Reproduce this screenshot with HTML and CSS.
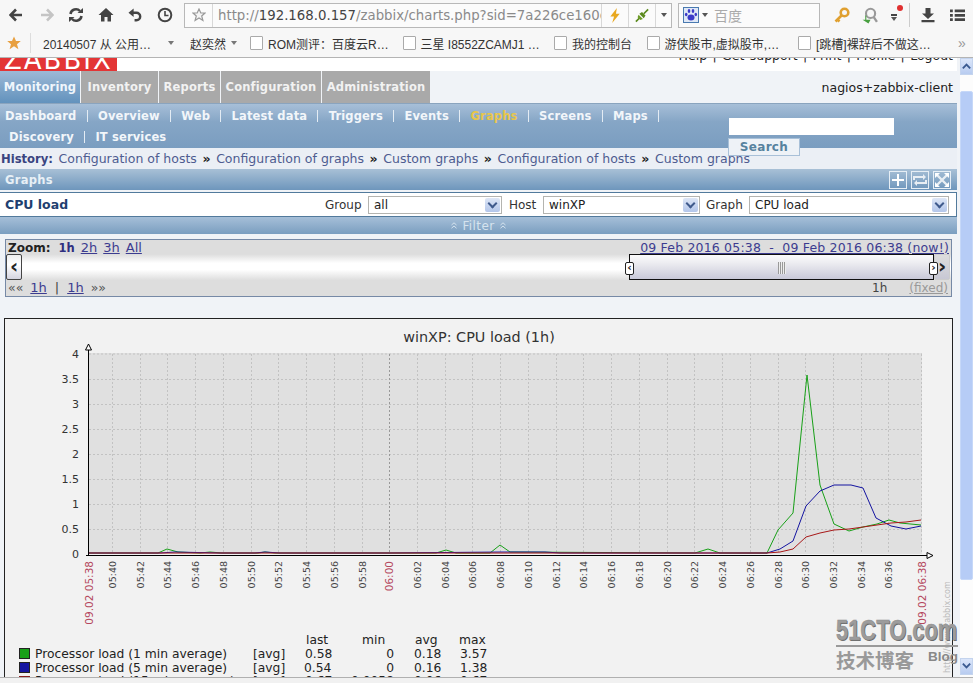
FILE: index.html
```html
<!DOCTYPE html>
<html lang="en">
<head>
<meta charset="utf-8">
<title>Zabbix charts</title>
<link rel="stylesheet" href="styles.css">
</head>
<body>
<header class="toolbar">
  <svg class="ico nav-back" viewBox="0 0 14 14"><path d="M7 1.5 1.5 7 7 12.5M2 7h11" fill="none" stroke="#444" stroke-width="2.6"/></svg>
  <svg class="ico nav-fwd" viewBox="0 0 14 14"><path d="M7 1.5 12.5 7 7 12.5M12 7H1" fill="none" stroke="#c4c4c4" stroke-width="2.6"/></svg>
  <svg class="ico nav-reload" viewBox="0 0 16 16"><path d="M2.5 7a5.5 5.5 0 0 1 9.5-3M13.500 9a5.500 5.500 0 0 1-9.500 3" fill="none" stroke="#444" stroke-width="2.500"/><path d="M9.500 6H15V1zM6.500 10H1v5z" fill="#444"/></svg>
  <svg class="ico nav-home" viewBox="0 0 16 16"><path d="M8 1 0.500 8H3v6.500h3.500V10h3v4.500H13V8h2.500z" fill="#444"/></svg>
  <svg class="ico nav-undo" viewBox="0 0 16 16"><path d="M4 5h5a4 4 0 0 1 0 8H7" fill="none" stroke="#444" stroke-width="2.600"/><path d="M6 0.500V9.500L0.500 5z" fill="#444"/></svg>
  <svg class="ico nav-clock" viewBox="0 0 16 16"><circle cx="8" cy="8" r="6.300" fill="none" stroke="#444" stroke-width="2"/><path d="M8 4v4.500h3.500" fill="none" stroke="#444" stroke-width="1.600"/></svg>
  <div class="urlbox">
    <svg class="url-star" viewBox="0 0 14 14"><path d="M7 1l1.800 4H13L9.700 8l1.200 4.500L7 10l-3.900 2.500L4.300 8 1 5h4.200z" fill="#f4f4f4" stroke="#999" stroke-width="1.200"/></svg>
    <span class="url-sep"></span>
    <span class="url-text"><span class="url-dim">http://</span>192.168.0.157<span class="url-dim">/zabbix/charts.php?sid=7a226ce160c6</span></span>
    <span class="url-sep"></span>
    <svg class="url-act" viewBox="0 0 14 16"><path d="M9 0 2 9h4l-2 7 8-10H8z" fill="#e8a820"/></svg>
    <span class="url-sep"></span>
    <svg class="url-act" viewBox="0 0 16 16"><path d="M1 15l5-5M15 1l-5 5" stroke="#5b8a1e" stroke-width="2"/><path d="M5 6l5 5 2-3-4-4z" fill="#5b8a1e"/><path d="M4 7l5 5-3 1-3-3z" fill="#6e9c28"/></svg>
    <span class="url-sep"></span>
    <span class="caret url-caret"></span>
  </div>
  <div class="searchbox">
    <span class="paw"><svg viewBox="0 0 14 14"><ellipse cx="7" cy="9.500" rx="3.500" ry="3" fill="#3b3bc8"/><ellipse cx="2.200" cy="6.500" rx="1.300" ry="1.700" fill="#3b3bc8"/><ellipse cx="11.800" cy="6.500" rx="1.300" ry="1.700" fill="#3b3bc8"/><ellipse cx="5" cy="3" rx="1.300" ry="1.900" fill="#3b3bc8"/><ellipse cx="9" cy="3" rx="1.300" ry="1.900" fill="#3b3bc8"/></svg></span>
    <span class="caret"></span>
    <span class="search-hint">百度</span>
  </div>
  <svg class="ico tool-key" viewBox="0 0 16 16"><circle cx="10.500" cy="5.500" r="3.800" fill="none" stroke="#e0a030" stroke-width="2.600"/><path d="M8 8 1.500 14.500M3.500 12.500l2 2" fill="none" stroke="#e0a030" stroke-width="2.600"/></svg>
  <svg class="ico tool-find" viewBox="0 0 16 16"><circle cx="9" cy="6" r="4.300" fill="none" stroke="#999" stroke-width="2"/><path d="M12 9.500l3 4.500" stroke="#999" stroke-width="2.200"/><path d="M5 8v4h4l-2 3.500L1.500 12H4V8z" fill="#48a040"/></svg>
  <span class="tool-menu"><span class="reddot"></span><span class="tool-bars"></span><span class="caret tool-caret"></span></span>
  <span class="tool-sep"></span>
  <svg class="ico tool-down" viewBox="0 0 16 16"><path d="M5.500 1h5v5.500H14L8 12 2 6.500h3.500zM1.500 13h13v2.200h-13z" fill="#444"/></svg>
  <svg class="ico tool-burger" viewBox="0 0 16 14"><path d="M0 1h3v3H0zM5 1h11v3H5zM0 5.800h3v3H0zM5 5.800h11v3H5zM0 10.500h3v3H0zM5 10.500h11v3H5z" fill="#444"/></svg>
</header>

<nav class="bookmarks">
  <svg class="bm-star" viewBox="0 0 14 14"><path d="M7 0.500l2 4.500h4.800L10 8.200l1.400 5L7 10.300l-4.400 2.900L4 8.200 0.200 5H5z" fill="#e8a040"/></svg>
  <span class="bm-sep"></span>
  <span class="bm bm-a">20140507 从 公用…<span class="caret bm-caret bm-caret-a"></span></span>
  <span class="bm bm-b">赵奕然<span class="caret bm-caret"></span></span>
  <span class="bm bm-c"><span class="doc"></span>ROM测评：百度云R…</span>
  <span class="bm bm-d"><span class="doc"></span>三星 I8552ZCAMJ1 …</span>
  <span class="bm bm-e"><span class="doc"></span>我的控制台</span>
  <span class="bm bm-f"><span class="doc"></span>游侠股市,虚拟股市,…</span>
  <span class="bm bm-g"><span class="doc"></span>[跳槽]裸辞后不做这…</span>
  <span class="bm-more">»</span>
</nav>

<div class="viewport">
  <main class="page">
    <div class="top-strip">
      <div class="logo"><span>ZABBIX</span></div>
      <div class="top-links">Help | Get support | Print | Profile | Logout</div>
    </div>
    <div class="tabs">
      <a class="tab tab-on tab-1">Monitoring</a>
      <a class="tab tab-2">Inventory</a>
      <a class="tab tab-3">Reports</a>
      <a class="tab tab-4">Configuration</a>
      <a class="tab tab-5">Administration</a>
      <span class="node-name">nagios+zabbix-client</span>
    </div>
    <div class="subnav">
      <div class="subrow">
        <a>Dashboard</a><i></i><a>Overview</a><i></i><a>Web</a><i></i><a>Latest data</a><i></i><a>Triggers</a><i></i><a>Events</a><i></i><a class="sub-on">Graphs</a><i></i><a>Screens</a><i></i><a>Maps</a><i></i>
      </div>
      <div class="subrow subrow-2"><a>Discovery</a><i></i><a>IT services</a></div>
      <span class="search-input"></span>
      <span class="search-btn">Search</span>
    </div>
    <div class="history">
      <b>History:</b> <a>Configuration of hosts</a> <em>»</em> <a>Configuration of graphs</a> <em>»</em> <a>Custom graphs</a> <em>»</em> <a>Configuration of hosts</a> <em>»</em> <a>Custom graphs</a>
    </div>
    <div class="sect-head">
      <span>Graphs</span>
      <div class="head-icons">
        <span class="head-icon"><svg viewBox="0 0 16 16"><path d="M8 2v12M2 8h12" stroke="#fff" stroke-width="2"/></svg></span>
        <span class="head-icon"><svg viewBox="0 0 16 16"><path d="M2 8V5h10M14 8v3H4" fill="none" stroke="#e8eef4" stroke-width="2"/><path d="M11 2l3 3-3 3M5 8l-3 3 3 3" fill="#e8eef4"/></svg></span>
        <span class="head-icon"><svg viewBox="0 0 16 16"><path d="M2 2l12 12M14 2 2 14" stroke="#e8eef4" stroke-width="2.400"/><path d="M1 1h5L1 6zM15 1v5l-5-5zM1 15v-5l5 5zM15 15h-5l5-5z" fill="#fff"/></svg></span>
      </div>
    </div>
    <div class="form-row">
      <strong class="form-title">CPU load</strong>
      <label class="f-label">Group</label><span class="sel sel-group">all<span class="sel-btn"></span></span>
      <label class="f-label">Host</label><span class="sel sel-host">winXP<span class="sel-btn"></span></span>
      <label class="f-label">Graph</label><span class="sel sel-graph">CPU load<span class="sel-btn"></span></span>
    </div>
    <div class="filter-bar">
      <svg class="chev" viewBox="0 0 6 7"><path d="M.5 3 3 .8 5.500 3M.5 6.200 3 4 5.500 6.200" fill="none" stroke="#d5e3ee"/></svg>
      <span>Filter</span>
      <svg class="chev" viewBox="0 0 6 7"><path d="M.5 3 3 .8 5.500 3M.5 6.200 3 4 5.500 6.200" fill="none" stroke="#d5e3ee"/></svg>
    </div>

    <section class="zoombox">
      <div class="zoom-row zoom-top">
        <div><b class="z-label">Zoom:</b><b class="z-cur">1h</b><a>2h</a><a>3h</a><a>All</a></div>
        <a class="z-dates">09 Feb 2016 05:38 &nbsp;-&nbsp; 09 Feb 2016 06:38 (now!)</a>
      </div>
      <div class="slider">
        <span class="s-btn s-left">‹</span>
        <span class="s-fill"></span>
        <span class="s-bar">
          <span class="s-handle s-h-l">‹</span>
          <span class="s-grip"></span>
          <span class="s-handle s-h-r">›</span>
        </span>
        <span class="s-btn s-right">›</span>
      </div>
      <div class="zoom-row zoom-bottom">
        <div><span class="z-arr">««</span><a>1h</a><span class="z-pipe">|</span><a>1h</a><span class="z-arr">»»</span></div>
        <div class="z-right"><span class="z-span">1h</span><a class="z-fixed">(fixed)</a></div>
      </div>
    </section>

    <section class="chart">
      <svg class="chart-svg" viewBox="5 319 947 358">
        <text class="c-title" x="479" y="342" text-anchor="middle">winXP: CPU load (1h)</text>
        <rect class="plot" x="89" y="353" width="833" height="201"/>
        <path class="grid" d="M89 354H922M89 379.500H922M89 404.500H922M89 429.500H922M89 454.500H922M89 479.500H922M89 504.500H922M89 529.500H922M112.500 354V554M140.500 354V554M167.500 354V554M195.500 354V554M223.500 354V554M251.500 354V554M278.500 354V554M306.500 354V554M334.500 354V554M362.500 354V554M417.500 354V554M445.500 354V554M472.500 354V554M500.500 354V554M528.500 354V554M556.500 354V554M583.500 354V554M611.500 354V554M639.500 354V554M667.500 354V554M694.500 354V554M722.500 354V554M750.500 354V554M778.500 354V554M805.500 354V554M833.500 354V554M861.500 354V554M888.500 354V554M921.500 354V554"/>
        <path class="grid grid-strong" d="M389.500 354V554"/>
        <polyline class="s-green" points="89,553 158,553 167,549 178,552 200,553 210,552 222,553 258,553 265,552 275,553 320,553 436,553 446,550 456,553 490,553 500,545 510,552 695,553 708,549 720,553 767,553 778,530 793,513 807,375 820,485 834,524 849,531 863,527 877,524 889,520 900,523 921,525"/>
        <polyline class="s-blue" points="89,553 160,553 175,552 220,553 255,553 265,552 280,553 390,553 500,552 545,552 560,553 767,553 780,549 793,541 806,506 820,491 834,485 851,485 863,488 876,518 891,526 906,529 921,526"/>
        <polyline class="s-red" points="89,553 767,553 780,552 793,549 806,537 820,533 834,530 849,529 863,527 877,525 891,523 906,522 921,520"/>
        <path class="axis" d="M88.500 347V556M86 555.500H928"/>
        <path class="arrow" d="M88.500 344 91.500 350H85.500zM933 555.500 927 552.500V558.500z"/>
        <g class="y-labels" text-anchor="end">
          <text x="79" y="358">4</text><text x="79" y="383">3.5</text><text x="79" y="408">3</text><text x="79" y="433">2.5</text><text x="79" y="458">2</text><text x="79" y="483">1.5</text><text x="79" y="508">1</text><text x="79" y="533">0.5</text><text x="79" y="558">0</text>
        </g>
        <g class="x-labels" text-anchor="end">
          <text transform="translate(116 561) rotate(-90)">05:40</text>
          <text transform="translate(144 561) rotate(-90)">05:42</text>
          <text transform="translate(171 561) rotate(-90)">05:44</text>
          <text transform="translate(199 561) rotate(-90)">05:46</text>
          <text transform="translate(227 561) rotate(-90)">05:48</text>
          <text transform="translate(255 561) rotate(-90)">05:50</text>
          <text transform="translate(282 561) rotate(-90)">05:52</text>
          <text transform="translate(310 561) rotate(-90)">05:54</text>
          <text transform="translate(338 561) rotate(-90)">05:56</text>
          <text transform="translate(366 561) rotate(-90)">05:58</text>
          <text transform="translate(421 561) rotate(-90)">06:02</text>
          <text transform="translate(449 561) rotate(-90)">06:04</text>
          <text transform="translate(476 561) rotate(-90)">06:06</text>
          <text transform="translate(504 561) rotate(-90)">06:08</text>
          <text transform="translate(532 561) rotate(-90)">06:10</text>
          <text transform="translate(560 561) rotate(-90)">06:12</text>
          <text transform="translate(587 561) rotate(-90)">06:14</text>
          <text transform="translate(615 561) rotate(-90)">06:16</text>
          <text transform="translate(643 561) rotate(-90)">06:18</text>
          <text transform="translate(671 561) rotate(-90)">06:20</text>
          <text transform="translate(698 561) rotate(-90)">06:22</text>
          <text transform="translate(726 561) rotate(-90)">06:24</text>
          <text transform="translate(754 561) rotate(-90)">06:26</text>
          <text transform="translate(782 561) rotate(-90)">06:28</text>
          <text transform="translate(809 561) rotate(-90)">06:30</text>
          <text transform="translate(837 561) rotate(-90)">06:32</text>
          <text transform="translate(865 561) rotate(-90)">06:34</text>
          <text transform="translate(892 561) rotate(-90)">06:36</text>
        </g>
        <g class="x-labels-red" text-anchor="end">
          <text transform="translate(93 561) rotate(-90)">09.02 05:38</text>
          <text transform="translate(393 561) rotate(-90)">06:00</text>
          <text transform="translate(926 561) rotate(-90)">09.02 06:38</text>
        </g>
        <text class="zabbix-url" transform="translate(950 673) rotate(-90)">http://www.zabbix.com</text>
        <g class="legend">
          <text x="306" y="644">last</text><text x="362" y="644">min</text><text x="415" y="644">avg</text><text x="459" y="644">max</text>
          <rect class="sw-g" x="19.500" y="648.500" width="10" height="10"/>
          <text x="35" y="658">Processor load (1 min average)</text><text x="253" y="658">[avg]</text><text x="305" y="658">0.58</text><text x="394" y="658" text-anchor="end">0</text><text x="414" y="658">0.18</text><text x="460" y="658">3.57</text>
          <rect class="sw-b" x="19.500" y="662.500" width="10" height="10"/>
          <text x="35" y="672">Processor load (5 min average)</text><text x="253" y="672">[avg]</text><text x="304" y="672">0.54</text><text x="394" y="672" text-anchor="end">0</text><text x="414" y="672">0.16</text><text x="460" y="672">1.38</text>
          <rect class="sw-r" x="19" y="676" width="11" height="11"/>
          <text x="35" y="685">Processor load (15 min average)</text><text x="253" y="685">[avg]</text><text x="305" y="685">0.67</text><text x="394" y="685" text-anchor="end">0.0058</text><text x="414" y="685">0.06</text><text x="460" y="685">0.67</text>
        </g>
      </svg>
    </section>
  </main>
  <aside class="scrollbar">
    <span class="sb-btn"><svg viewBox="0 0 12 8"><path d="M2 6.500 6 2.500l4 4" fill="none" stroke="#3a5a90" stroke-width="2"/></svg></span>
    <span class="sb-thumb"></span>
    <span class="sb-btn sb-down"><svg viewBox="0 0 12 8"><path d="M2 1.500 6 5.500l4-4" fill="none" stroke="#3a5a90" stroke-width="2"/></svg></span>
  </aside>
  <div class="watermark">
    <div class="wm-main">51CTO.com</div>
    <div class="wm-line"></div>
    <div class="wm-sub"><span>技术博客</span><span class="wm-blog">Blog</span></div>
  </div>
</div>
<footer class="statusbar"></footer>
</body>
</html>
```
FILE: styles.css
```css
* { box-sizing: border-box; }
html, body { margin: 0; padding: 0; }
body {
  width: 973px; height: 683px; overflow: hidden;
  display: flex; flex-direction: column;
  font-family: "DejaVu Sans", "Noto Sans CJK SC", sans-serif;
  font-size: 12px; background: #f1f1f1; position: relative;
}
a { text-decoration: none; }

/* browser toolbar */
.toolbar {
  height: 30px; flex: none; display: flex; align-items: center;
  background: #f7f7f7; padding-left: 9px;
}
.ico { flex: none; display: block; }
.nav-back { width: 14px; height: 14px; }
.nav-fwd { width: 14px; height: 14px; margin-left: 17px; }
.nav-reload { width: 16px; height: 16px; margin-left: 14px; }
.nav-home { width: 16px; height: 16px; margin-left: 14px; }
.nav-undo { width: 15px; height: 15px; margin-left: 14px; }
.nav-clock { width: 16px; height: 16px; margin-left: 14px; }
.urlbox {
  width: 488px; height: 25px; margin-left: 11px; flex: none;
  display: flex; align-items: center;
  border: 1px solid #b8b8b8; background: #fbfbfb; overflow: hidden;
}
.url-star { width: 14px; height: 14px; margin: 0 6px 0 7px; flex: none; }
.url-sep { width: 1px; height: 24px; background: #d8d8d8; flex: none; }
.url-text {
  width: 383px; flex: none; margin-left: 5px; overflow: hidden; white-space: nowrap;
  font-size: 13.300px; color: #444; font-family: "DejaVu Sans", sans-serif;
}
.url-dim { color: #8a8a8a; }
.url-act { width: 14px; height: 15px; margin: 0 6px; flex: none; }
.caret {
  display: inline-block; width: 0; height: 0; flex: none;
  border-left: 3.500px solid transparent; border-right: 3.500px solid transparent;
  border-top: 4px solid #555;
}
.url-caret { margin-left: 5px; }
.searchbox {
  width: 142px; height: 25px; margin-left: 6px; flex: none;
  display: flex; align-items: center; padding-left: 4px;
  border: 1px solid #b8b8b8; background: #fbfbfb;
}
.paw { width: 16px; height: 16px; border: 1px solid #4a7ab0; background: #dfe8f6; display: block; flex: none; }
.paw svg { display: block; width: 14px; height: 14px; }
.searchbox .caret { margin-left: 3px; }
.search-hint { margin-left: 6px; font-size: 14px; color: #aaa; font-family: "Noto Sans CJK SC", sans-serif; }
.tool-key { width: 16px; height: 16px; margin-left: 14px; }
.tool-find { width: 17px; height: 17px; margin-left: 11px; }
.tool-menu { width: 12px; height: 20px; margin-left: 13px; position: relative; flex: none; }
.reddot { position: absolute; left: 6px; top: 0; width: 6px; height: 6px; border-radius: 50%; background: #e03030; }
.tool-bars { position: absolute; left: 0; top: 9px; width: 6px; height: 2px; background: #444; }
.tool-caret { position: absolute; left: 0; top: 12px; }
.tool-sep { width: 1px; height: 24px; background: #ccc; margin-left: 6px; flex: none; }
.tool-down { width: 16px; height: 16px; margin-left: 10px; }
.tool-burger { width: 15px; height: 14px; margin-left: 14px; }

/* bookmarks */
.bookmarks {
  height: 28px; flex: none; display: flex; align-items: center;
  background: #f7f7f7; border-bottom: 1px solid #b4b4b4; padding: 0 0 1px 7px;
  font-family: "Liberation Sans", "Noto Sans CJK SC", sans-serif; font-size: 12px; color: #333;
}
.bm-star { width: 14px; height: 14px; flex: none; }
.bm-sep { width: 1px; height: 20px; background: #ddd; margin-left: 9px; flex: none; }
.bm { display: flex; align-items: center; flex: none; white-space: nowrap; }
.bm-a { width: 147px; margin-left: 12px; }
.bm-b { width: 60px; }
.bm-c { width: 152.500px; }
.bm-d { width: 151.500px; }
.bm-e { width: 92.500px; }
.bm-f { width: 151.500px; }
.bm-g { width: 160px; }
.bm-caret { margin-left: 5px; border-top-color: #777; border-left-width: 3px; border-right-width: 3px; }
.bm-caret-a { margin-left: 17px; }
.doc { width: 13px; height: 14px; border: 1px solid #aaa; background: #fff; border-radius: 1px; margin-right: 5px; flex: none; }
.bm-more { color: #999; font-size: 14px; }

/* viewport */
.viewport { height: 620px; flex: none; display: flex; position: relative; border-bottom: 1px solid #b0b0b0; background: #fff; }
.page { width: 960px; height: 619px; overflow: hidden; flex: none; background: #f0f3f7; padding-right: 3px; }
.top-strip { height: 13px; display: flex; justify-content: space-between; align-items: flex-start; overflow: hidden; background: #fff; }
.logo { width: 117px; height: 13px; background: #e33535; position: relative; overflow: hidden; flex: none; }
.logo span {
  position: absolute; left: 4px; bottom: -2px; color: #fff; font: 400 26px/26px "DejaVu Sans", sans-serif; letter-spacing: 2px;
}
.top-links { flex: none; height: 5px; display: flex; align-items: flex-end; font-size: 12.500px; line-height: 15px; word-spacing: 1.400px; color: #222; padding-right: 4px; white-space: nowrap; }

.tabs { height: 33px; display: flex; align-items: stretch; gap: 1px; border-bottom: 1px solid #8aa4be; }
.tab {
  display: flex; align-items: center; justify-content: center; flex: none;
  background: #a9a9a9; color: #f2f2f2; font-weight: 700; font-size: 11.500px; letter-spacing: .15px;
}
.tab-on { background: linear-gradient(#9db9d6, #6292bd); color: #f0f6fc; }
.tab-1 { width: 80px; }
.tab-2 { width: 77px; }
.tab-3 { width: 61px; }
.tab-4 { width: 100px; }
.tab-5 { width: 108px; }
.node-name { margin-left: auto; align-self: center; padding: 0 4px 0 0; color: #222; font-size: 12.500px; }

.subnav { height: 44px; position: relative; background: linear-gradient(#a7bfd8 0, #86a6c6 40%, #7a9dc0 100%); padding: 1px 0 0 5px; }
.subrow { height: 21px; display: flex; align-items: center; color: #f2f6fa; font-weight: 700; font-size: 11.500px; letter-spacing: .15px; }
.subrow i { width: 1px; height: 12px; background: #e4ecf4; margin: 0 10.250px; flex: none; }
.sub-on { color: #e8c64a; }
.subrow-2 { padding-left: 4px; }
.search-input { position: absolute; left: 729px; top: 14px; width: 165px; height: 17px; background: #fff; }
.search-btn {
  position: absolute; left: 728px; top: 34px; width: 72px; height: 18px; z-index: 2;
  background: #eef2f7; border: 1px solid #a8c0d8; color: #56829e; font-weight: 700; font-size: 12px; text-align: center; line-height: 17px; letter-spacing: .3px;
}

.history { height: 21px; display: flex; align-items: center; gap: 5.600px; padding-left: 1px; color: #4e5c90; background: #ebeff5; font-size: 12.500px; white-space: nowrap; }
.history b { color: #3a4480; font-size: 11.600px; }
.history em { font-style: normal; font-weight: 700; color: #222; }

.sect-head {
  height: 21px; display: flex; align-items: center; justify-content: space-between;
  padding: 0 6px 0 5px; color: #e8f0f6; font-weight: 700; font-size: 11.500px; letter-spacing: .3px;
  background: linear-gradient(#a8c0d6, #6e96bc);
}
.head-icons { display: flex; gap: 4px; }
.head-icon { width: 18px; height: 18px; border: 1px solid #e6eef5; display: block; }
.head-icon svg { display: block; width: 16px; height: 16px; }

.form-row {
  height: 25px; margin-top: 2px; display: flex; align-items: center;
  background: #fff; border: 1px solid #527a9c; border-left: 0; padding-left: 5px; color: #333;
}
.form-title { width: 320px; color: #1f3f70; font-size: 12.500px; flex: none; }
.f-label { flex: none; font-size: 12px; width: 43px; }
.sel {
  flex: none; height: 18px; border: 1px solid #b4b4b0; background: #fff; position: relative;
  font-size: 12px; line-height: 16px; padding-left: 5px; color: #222; margin-right: 7px;
}
.sel-group { width: 134px; }
.sel-host { width: 157px; margin-right: 6px; }
.sel-graph { width: 200px; }
.f-label:nth-of-type(2) { width: 34px; }
.sel-btn {
  position: absolute; right: 1px; top: 1px; width: 15px; height: 14px; border-radius: 2px;
  background: linear-gradient(#dde6f6, #b3c6ea);
}
.sel-btn::after {
  content: ""; position: absolute; left: 4px; top: 2px; width: 5px; height: 5px;
  border-right: 2px solid #3f5a8c; border-bottom: 2px solid #3f5a8c; transform: rotate(45deg);
}
.filter-bar {
  height: 17px; display: flex; align-items: center; justify-content: center; gap: 5px;
  color: #d5e3ee; font-size: 12px; letter-spacing: .4px;
  background: linear-gradient(#a6bfd8, #7a9ec0);
}
.chev { width: 6px; height: 7px; flex: none; }

.zoombox { margin: 5px 5px 0 5px; height: 58px; border: 1px solid #7689a6; background: #ddd; display: flex; flex-direction: column; }
.zoom-row { display: flex; justify-content: space-between; flex: none; color: #222; font-size: 12px; }
.zoom-row a { color: #3c3c90; text-decoration: underline; }
.zoom-top { height: 14px; line-height: 15px; padding: 0 2px; }
.zoom-top div a { margin-left: 6px; font-size: 13px; }
.z-label { margin-right: 8px; letter-spacing: 0; }
.z-cur { color: #2f2f80; font-size: 11.500px; }
.z-dates { font-size: 12.500px; letter-spacing: .18px; }
.slider { height: 26px; flex: none; display: flex; position: relative; background: linear-gradient(#dcdcdc, #fff 35%, #fff 60%, #dedede); }
.s-btn { width: 16px; height: 26px; flex: none; font: 700 20px/22px "DejaVu Sans", sans-serif; text-align: center; color: #222; border: 1px solid #444; border-radius: 2px; background: linear-gradient(#eee, #fff 40%, #d4d4e0); }
.s-fill { flex: 1; }
.s-right { border-color: #ccc; background: linear-gradient(#ddd, #c8c8d4); margin-right: 1px; }
.s-bar {
  position: absolute; left: 623px; top: 0; width: 305px; height: 26px; z-index: 1;
  border: 1px solid #111; background: linear-gradient(#fbfbfb, #eeeef2 30%, #c9c9d9);
}
.s-handle {
  position: absolute; top: 7px; width: 9px; height: 13px; background: #fff; border: 1px solid #222; border-radius: 2px;
  font: 700 11px/10px "DejaVu Sans", sans-serif; text-align: center; color: #222;
}
.s-h-l { left: -5px; }
.s-h-r { right: -5px; }
.s-grip {
  position: absolute; left: 148px; top: 7px; width: 8px; height: 12px;
  background: repeating-linear-gradient(90deg, #999 0 1px, #eee 1px 2px);
}
.zoom-bottom { height: 16px; line-height: 16px; padding: 0 3px 0 2px; color: #444; font-size: 13px; }
.zoom-bottom div a { margin: 0 7px; }
.z-arr { color: #555; font-size: 12.500px; }
.z-pipe { color: #444; margin: 0 1px; }
.z-right { font-size: 12px; }
.z-span { margin-right: 22px; }
.zoom-row a.z-fixed { color: #999; margin: 0; }

.chart { margin: 21px 4px 0 4px; height: 360px; border: 1px solid #222; border-bottom: 0; background: #f2f2f2; }
.chart-svg { display: block; width: 947px; height: 358px; font-family: "DejaVu Sans", sans-serif; overflow: hidden; }
.c-title { font-size: 14.400px; fill: #333; }
.plot { fill: #e0e0e0; }
.grid { fill: none; stroke: #c2c2c2; stroke-width: 1; stroke-dasharray: 2 2; }
.grid-strong { stroke: #999; }
.s-green { fill: none; stroke: #18a018; stroke-width: 1; }
.s-blue { fill: none; stroke: #1414a0; stroke-width: 1; }
.s-red { fill: none; stroke: #a81818; stroke-width: 1; }
.axis { fill: none; stroke: #000; stroke-width: 1; }
.arrow { fill: #fff; stroke: #000; stroke-width: 1; }
.y-labels { font-size: 11px; fill: #333; }
.x-labels { font-size: 9.500px; fill: #444; }
.x-labels-red { font-size: 10.500px; fill: #b5485e; }
.zabbix-url { font-size: 8px; fill: #bbb; }
.legend { font-size: 12.300px; fill: #222; }
.sw-g { fill: #18a018; stroke: #222; }
.sw-b { fill: #1414a0; stroke: #222; }
.sw-r { fill: #8a2020; stroke: none; }

.scrollbar { width: 13px; flex: none; display: flex; flex-direction: column; background: #fcfcfc; height: 619px; }
.sb-btn { height: 17px; flex: none; background: linear-gradient(#dbe6fa, #b8ccf0); border: 1px solid #c4d4ee; display: block; }
.sb-btn svg { display: block; width: 11px; height: 8px; margin: 3px 0 0; }
.sb-thumb { height: 489px; margin-top: 16px; flex: none; background: #b6ccf6; border: 1px solid #c6d8f8; border-radius: 2px; }
.sb-down { margin-top: auto; margin-bottom: 2px; }

.watermark { position: absolute; left: 836px; top: 559px; width: 122px; color: #9a9a9a; z-index: 3; }
.wm-main { font: 700 30px/26px "Liberation Sans", sans-serif; color: #9c9c9c; -webkit-text-stroke: .6px #8f8f8f; text-shadow: 1px 1px 0 #666; white-space: nowrap; transform-origin: left; transform: scaleX(.73); }
.wm-line { height: 2px; background: #9a9a9a; margin: 2px 0 3px; }
.wm-sub { display: flex; justify-content: space-between; font: 700 19.500px/20px "Noto Sans CJK SC", sans-serif; color: #999; }
.wm-blog { font: 700 13.500px/14px "Liberation Sans", sans-serif; color: #888; }

.statusbar { flex: 1; background: #f1f1f1; }
```
